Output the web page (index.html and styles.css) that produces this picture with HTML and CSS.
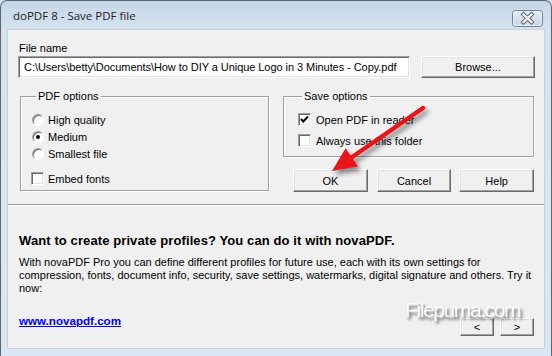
FILE: index.html
```html
<!DOCTYPE html>
<html lang="en">
  <head>
    <meta charset="UTF-8" />
    <title>doPDF 8 - Save PDF file</title>
    <link rel="stylesheet" href="styles.css">
  </head>
  <body>
    <div class="window">
      <div class="titlebar">
        <div class="title">doPDF 8 - Save PDF file</div>
        <div class="close">
          <svg width="31" height="17" viewBox="0 0 31 17">
            <defs>
              <linearGradient id="closeBg" x1="0" y1="0" x2="0" y2="1">
                <stop offset="0" stop-color="#e6edf5" />
                <stop offset="0.5" stop-color="#d6e0ec" />
                <stop offset="1" stop-color="#c9d6e5" />
              </linearGradient>
            </defs>
            <rect x="0.5" y="0.5" width="30" height="16" rx="3" fill="url(#closeBg)" stroke="#6f8198" />
            <rect x="1.5" y="1.5" width="28" height="14" rx="2" fill="none" stroke="#f3f6fa" stroke-opacity="0.7" />
            <path d="M11.5 4.5 L19.5 12 M19.5 4.5 L11.5 12" stroke="#59687c" stroke-width="4.2" stroke-linecap="square" />
            <path d="M11.5 4.5 L19.5 12 M19.5 4.5 L11.5 12" stroke="#ffffff" stroke-width="2.2" stroke-linecap="square" />
          </svg>
        </div>
      </div>

      <div class="client">
        <div class="main">
          <div class="label">File name</div>
          <div class="file-row">
            <div class="input">C:\Users\betty\Documents\How to DIY a Unique Logo in 3 Minutes - Copy.pdf</div>
            <button class="btn browse">Browse...</button>
          </div>

          <div class="groups">
            <fieldset class="group pdf">
              <legend>PDF options</legend>
              <div class="opt"><span class="radio"></span>High quality</div>
              <div class="opt"><span class="radio on"></span>Medium</div>
              <div class="opt"><span class="radio"></span>Smallest file</div>
              <div class="opt embed"><span class="check"></span>Embed fonts</div>
            </fieldset>

            <div class="right-col">
              <fieldset class="group save">
                <legend>Save options</legend>
                <div class="opt wide">
                  <span class="check">
                    <svg width="11" height="11" viewBox="0 0 11 11"><path d="M2 5 L4.3 7.5 L9 2.5" fill="none" stroke="#000" stroke-width="2" /></svg>
                  </span>Open PDF in reader
                </div>
                <div class="opt wide"><span class="check"></span>Always use this folder</div>
              </fieldset>
              <div class="actions">
                <button class="btn ok">OK</button>
                <button class="btn">Cancel</button>
                <button class="btn">Help</button>
              </div>
            </div>
          </div>
        </div>

        <div class="sep"></div>

        <div class="promo">
          <h3>Want to create private profiles? You can do it with novaPDF.</h3>
          <p>
            With novaPDF Pro you can define different profiles for future use, each with its own settings for<br>
            compression, fonts, document info, security, save settings, watermarks, digital signature and others. Try it<br>
            now:
          </p>
          <div class="promo-foot">
            <a href="#">www.novapdf.com</a>
            <div class="nav">
              <button class="btn small">&lt;</button>
              <button class="btn small">&gt;</button>
            </div>
          </div>
        </div>
      </div>
    </div>

    <svg class="arrow" width="552" height="356" viewBox="0 0 552 356">
      <defs>
        <filter id="shadow" x="-20%" y="-20%" width="150%" height="150%">
          <feDropShadow dx="3" dy="4" stdDeviation="2.5" flood-color="#000" flood-opacity="0.45" />
        </filter>
      </defs>
      <g filter="url(#shadow)">
        <line x1="423" y1="108" x2="350" y2="158.5" stroke="#e8161c" stroke-width="4.5" stroke-linecap="round" />
        <polygon points="332,171 345.6,148.3 358,166.5" fill="#e8161c" />
      </g>
    </svg>

    <div class="watermark">Filepuma.com</div>
  </body>
</html>
```

FILE: styles.css
```css
* {
  box-sizing: border-box;
}
body {
  margin: 0;
  position: relative;
  width: 552px;
  height: 356px;
  overflow: hidden;
  font-family: "Liberation Sans", Arial, sans-serif;
  font-size: 11px;
  color: #000;
  background-color: #dbe6f2;
}
.window {
  width: 552px;
  height: 356px;
  display: flex;
  flex-direction: column;
  padding: 0 7px 8px;
  border: 1px solid #5d6672;
  border-bottom: none;
  border-radius: 7px 7px 0 0;
  background: linear-gradient(#c7d6e7, #d6e2ef 30px, #dbe6f2);
}
.titlebar {
  height: 29px;
  display: flex;
  justify-content: space-between;
  flex-shrink: 0;
}
.title {
  font-family: "Open Sans", "Noto Sans", sans-serif;
  font-size: 11.5px;
  color: #1e1e1e;
  padding: 7px 0 0 5px;
}
.close {
  width: 31px;
  height: 17px;
  margin-top: 9px;
  margin-right: 1px;
}
.close svg {
  display: block;
}
.client {
  flex: 1;
  background-color: #f0f0f0;
  box-shadow: 0 0 0 1px #c3d2e3;
}
.main {
  height: 174px;
  padding: 12px 9px 0 10px;
}
.label {
  line-height: 13px;
  padding-left: 1px;
}
.file-row {
  display: flex;
  margin-top: 1px;
}
.input {
  width: 392px;
  height: 22px;
  padding: 4px 5px;
  line-height: 13px;
  letter-spacing: -0.06px;
  white-space: nowrap;
  overflow: hidden;
  background-color: white;
  border: 1px solid;
  border-color: #a0a0a0 #fff #fff #a0a0a0;
  box-shadow: inset 1px 1px #696969, inset -1px -1px #e3e3e3;
}
.btn {
  height: 23px;
  padding: 0;
  font-family: "Liberation Sans", Arial, sans-serif;
  font-size: 11px;
  color: #000;
  background-color: #f0f0f0;
  border: 1px solid;
  border-color: #fff #696969 #696969 #fff;
  box-shadow: inset -1px -1px #a0a0a0, inset 1px 1px #e3e3e3;
}
.browse {
  width: 114px;
  height: 22px;
  margin-left: 11px;
}
.groups {
  display: flex;
  margin-top: 12px;
  margin-left: 2px;
}
.group {
  margin: 0;
  padding: 8px 0 0 11px;
  border: 1px solid #a0a0a0;
  box-shadow: inset 1px 1px #fff, 1px 1px #fff;
}
.group legend {
  padding: 0 2px;
  margin-left: 4px;
  line-height: 13px;
}
.pdf {
  width: 249px;
  height: 101px;
}
.opt {
  display: flex;
  align-items: center;
  height: 17px;
}
.opt.embed {
  margin-top: 8px;
}
.radio {
  width: 12px;
  height: 12px;
  margin-right: 4px;
  border-radius: 50%;
  background-color: white;
  border: 1px solid;
  border-color: #a0a0a0 #fff #fff #a0a0a0;
  box-shadow: inset 1px 1px #696969;
  display: flex;
  align-items: center;
  justify-content: center;
}
.radio.on::after {
  content: "";
  width: 4px;
  height: 4px;
  border-radius: 50%;
  background-color: #000;
}
.check {
  width: 13px;
  height: 13px;
  margin-left: -1px;
  margin-right: 4px;
  background-color: white;
  border: 1px solid;
  border-color: #a0a0a0 #fff #fff #a0a0a0;
  box-shadow: inset 1px 1px #696969, inset -1px -1px #e3e3e3;
  display: flex;
  align-items: center;
  justify-content: center;
}
.check svg {
  display: block;
}
.right-col {
  width: 251px;
  margin-left: 14px;
}
.save {
  width: 251px;
  height: 67px;
  padding: 6px 0 0 14px;
}
.opt.wide {
  height: 21px;
}
.opt.wide .check {
  margin-left: 0;
  margin-right: 5px;
}
.actions {
  display: flex;
  gap: 8px;
  margin-top: 12px;
  margin-left: 10px;
}
.actions .btn {
  width: 75px;
}
.actions .ok {
  margin-right: 1px;
}
.sep {
  height: 2px;
  border-top: 1px solid #a0a0a0;
  border-bottom: 1px solid #fff;
}
.promo {
  padding: 27px 10px 0 11px;
}
.promo h3 {
  margin: 0;
  font-size: 13px;
  line-height: 15px;
  letter-spacing: 0.1px;
}
.promo p {
  margin: 8px 0 0;
  line-height: 13px;
}
.promo-foot {
  display: flex;
  justify-content: space-between;
  align-items: flex-start;
  margin-top: 19px;
}
.promo-foot a {
  font-weight: bold;
  font-size: 11.6px;
  line-height: 13px;
  color: #0000ff;
  text-decoration: underline;
}
.nav {
  display: flex;
  gap: 6px;
  margin-top: 4px;
}
.btn.small {
  width: 34px;
  height: 18px;
  line-height: 14px;
}
.arrow {
  position: absolute;
  left: 0;
  top: 0;
  pointer-events: none;
}
.watermark {
  position: absolute;
  left: 405px;
  top: 299px;
  font-family: "Liberation Sans", Arial, sans-serif;
  font-size: 21px;
  line-height: 22px;
  letter-spacing: -1.4px;
  color: #fafafa;
  text-shadow: 2px 3px 3px rgba(0, 0, 0, 0.55);
  pointer-events: none;
}
```
